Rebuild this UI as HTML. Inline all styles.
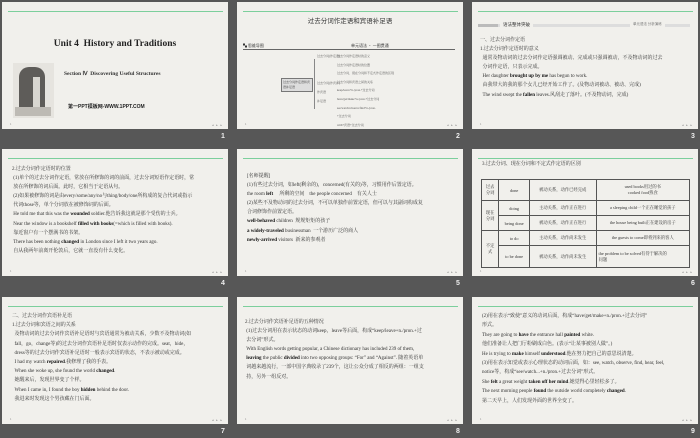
<!DOCTYPE html>
<html><head><meta charset="utf-8"><style>
*{margin:0;padding:0;box-sizing:border-box}
body{width:700px;height:438px;background:#575757;position:relative;overflow:hidden;font-family:"Liberation Serif","Noto Serif CJK SC","Noto Sans CJK SC",serif;color:#333}
.s{position:absolute;width:226px;height:127px;background:#f1f0ec;overflow:hidden}
.s:before{content:"";position:absolute;left:6px;right:5px;top:9px;height:1px;background:#7ccf9c}
.n{position:absolute;font:bold 7px "Liberation Sans",sans-serif;color:#eee}
.pg{position:absolute;left:8px;bottom:3px;font-size:3px;color:#777}
.nav{position:absolute;right:5px;bottom:2px;font-size:3px;color:#888;letter-spacing:1px}
.t{position:absolute;font-size:5px;line-height:9.1px;white-space:nowrap;color:#333}
.t div{white-space:nowrap}
b{color:#111}
table{border-collapse:collapse;position:absolute;font-size:4.3px;color:#333}
td{border:0.8px solid #555;text-align:center;padding:0 2px}
</style></head><body>

<!-- slide 1 -->
<div class="s" style="left:2px;top:2px">
<div style="position:absolute;left:0;width:226px;top:37px;text-align:center;font:bold 9.5px 'Liberation Serif',serif;color:#222">Unit 4&nbsp; History and Traditions</div>
<div style="position:absolute;left:11px;top:61px;width:41px;height:55px;background:#e6e4df">
<div style="position:absolute;left:6px;top:4px;width:26px;height:44px;background:#5e5c59;border-radius:10px 10px 3px 3px"></div>
<div style="position:absolute;left:20px;top:14px;width:7px;height:30px;background:#d8d6d0"></div>
<div style="position:absolute;left:2px;top:44px;width:36px;height:9px;background:#bdbab4"></div>
</div>
<div style="position:absolute;left:62px;top:69px;font:bold 5.5px 'Liberation Serif',serif;color:#333">Section Ⅳ&nbsp; Discovering Useful Structures</div>
<div style="position:absolute;left:66px;top:101px;font:bold 5px 'Liberation Sans','Noto Sans CJK SC',sans-serif;color:#222">第一PPT模板网-WWW.1PPT.COM</div>
<div class="pg">1</div><div class="nav">◂ ▸ ▸</div>
</div>
<div class="n" style="left:221px;top:133px">1</div>

<!-- slide 2 -->
<div class="s" style="left:237px;top:2px">
<div style="position:absolute;left:0;width:226px;top:13px;text-align:center;font:6.5px 'Noto Sans CJK SC',sans-serif;color:#333">过去分词作定语和宾语补足语</div>
<div style="position:absolute;left:6px;top:41px;width:212px;border-bottom:0.6px solid #666;font:4px 'Noto Sans CJK SC',sans-serif;color:#333">▚ 思维导图<span style="position:absolute;left:108px;top:0">单元语法 · 一图贯通</span></div>
<div style="position:absolute;left:44px;top:76px;width:32px;height:14px;border:0.6px solid #777;background:#ddd;font-size:3px;line-height:5px;padding:1px">过去分词作定语和宾语补足语</div>
<div style="position:absolute;left:77px;top:57px;width:1px;height:50px;background:#888"></div>
<div class="t" style="left:80px;top:50px;font-size:3px;line-height:9px;color:#555"><div>过去分词(作定语)</div><div>&nbsp;</div><div>&nbsp;</div><div>过去分词(作宾补)</div><div>作宾语</div><div>补足语</div></div>
<div class="t" style="left:100px;top:50px;font-size:3px;line-height:8.6px;color:#555"><div>过去分词作定语时的意义</div><div>过去分词作定语时的位置</div><div>过去分词、现在分词和不定式作定语的区别</div><div>过去分词和宾语之间的关系</div><div>keep/leave+n./pron.+过去分词</div><div>have/get/make+n./pron.+过去分词</div><div>see/watch/observe/find+n./pron.</div><div>+过去分词</div><div>with+宾语+过去分词</div></div>
<div class="pg">1</div><div class="nav">◂ ▸ ▸</div>
</div>
<div class="n" style="left:456px;top:133px">2</div>

<!-- slide 3 -->
<div class="s" style="left:472px;top:2px">
<div style="position:absolute;left:6px;top:22px;width:212px;height:3px;background:#ddd"></div>
<div style="position:absolute;left:6px;top:22px;width:20px;height:3px;background:#bbb"></div>
<div style="position:absolute;left:28px;top:20px;padding:0 3px;background:#f1f0ec;font:4.5px 'Noto Sans CJK SC',sans-serif;color:#333">语法整体突破</div>
<div style="position:absolute;left:158px;top:20px;padding:0 3px;background:#f1f0ec;font:3.5px 'Noto Sans CJK SC',sans-serif;color:#777">单元语法 分析演练</div>
<div class="t" style="left:8px;top:34px"><div>一、过去分词作定语</div><div>1.过去分词作定语时的意义</div><div>&nbsp;&nbsp;通常及物动词的过去分词作定语强调被动、完成或只强调被动，不及物动词的过去</div><div>&nbsp;&nbsp;分词作定语，只表示完成。</div><div>&nbsp;&nbsp;Her daughter <b>brought up by me</b> has begun to work.</div><div>&nbsp;&nbsp;由我带大的我的那个女儿已经开始工作了。(及物动词被动、被动、完成)</div><div>&nbsp;&nbsp;The wind swept the <b>fallen</b> leaves.风刮走了落叶。(不及物动词，完成)</div></div>
<div class="pg">1</div><div class="nav">◂ ▸ ▸</div>
</div>
<div class="n" style="left:691px;top:133px">3</div>

<!-- slide 4 -->
<div class="s" style="left:2px;top:149px">
<div class="t" style="left:10px;top:16px"><div>2.过去分词作定语时的位置</div><div>&nbsp;(1)单个的过去分词作定语，常放在所修饰的词的前面，过去分词短语作定语时，常</div><div>&nbsp;放在所修饰的词后面。此时，它相当于定语从句。</div><div>&nbsp;(2)如果被修饰的词是由every/some/any/no与thing/body/one所构成的复合代词或指示</div><div>&nbsp;代词those等，单个分词放在被修饰词的后面。</div><div>&nbsp;He told me that this was the <b>wounded</b> soldier.他告诉我这就是那个受伤的士兵。</div><div>&nbsp;Near the window is a bookshelf <b>filled with books</b>(=which is filled with books).</div><div>&nbsp;靠近窗户有一个摆满书的书架。</div><div>&nbsp;There has been nothing <b>changed</b> in London since I left it two years ago.</div><div>&nbsp;自从我两年前离开伦敦后，它就一直没有什么变化。</div></div>
<div class="pg">1</div><div class="nav">◂ ▸ ▸</div>
</div>
<div class="n" style="left:221px;top:280px">4</div>

<!-- slide 5 -->
<div class="s" style="left:237px;top:149px">
<div class="t" style="left:10px;top:23px"><div>[名师提醒]</div><div>(1)有些过去分词，如left(剩余的)，concerned(有关的)等，习惯用作后置定语。</div><div>the room <b>left</b>&nbsp;&nbsp;&nbsp;&nbsp;&nbsp;所剩的空间&nbsp;&nbsp;&nbsp;&nbsp;the people concerned&nbsp;&nbsp;&nbsp;&nbsp;有关人士</div><div>(2)某些不及物动词的过去分词，不可以单独作前置定语，但可以与其副词构成复</div><div>合词修饰作前置定语。</div><div><b>well-behaved</b> children&nbsp; 规规矩矩的孩子</div><div><b>a widely-traveled</b> businessman&nbsp; 一个游历广泛的商人</div><div><b>newly-arrived</b> visitors&nbsp; 新来的参观者</div></div>
<div class="pg">1</div><div class="nav">◂ ▸ ▸</div>
</div>
<div class="n" style="left:456px;top:280px">5</div>

<!-- slide 6 -->
<div class="s" style="left:472px;top:149px">
<div class="t" style="left:10px;top:11px"><div>3.过去分词、现在分词和不定式作定语的区别</div></div>
<table style="left:9px;top:30px;width:209px;height:89px">
<tr style="height:21px"><td>过去<br>分词</td><td>done</td><td>被动关系，动作已经完成</td><td>used books用过的书<br>cooked food熟食</td></tr>
<tr style="height:15px"><td rowspan="2">现在<br>分词</td><td>doing</td><td>主动关系，动作正在进行</td><td>a sleeping child一个正在睡觉的孩子</td></tr>
<tr style="height:15px"><td>being done</td><td>被动关系，动作正在进行</td><td>the house being built正在建设的房子</td></tr>
<tr style="height:15px"><td rowspan="2">不定<br>式</td><td>to do</td><td>主动关系，动作尚未发生</td><td>the guests to come即将到来的客人</td></tr>
<tr style="height:22px"><td>to be done</td><td>被动关系，动作尚未发生</td><td style="text-align:left">the problem to be solved有待于解决的<br>问题</td></tr>
</table>
<div class="pg">1</div><div class="nav">◂ ▸ ▸</div>
</div>
<div class="n" style="left:691px;top:280px">6</div>

<!-- slide 7 -->
<div class="s" style="left:2px;top:297px">
<div class="t" style="left:10px;top:15px;line-height:9.2px"><div>二、过去分词作宾语补足语</div><div>1.过去分词和宾语之间的关系</div><div>&nbsp;&nbsp;及物动词的过去分词作宾语补足语时与宾语通常为被动关系，少数不及物动词(如</div><div>&nbsp;&nbsp;fall，go，change等)的过去分词作宾语补足语时仅表示动作的完成。seat，hide，</div><div>&nbsp;&nbsp;dress等的过去分词作宾语补足语时一般表示宾语的状态，不表示被动或完成。</div><div>&nbsp;&nbsp;I had my watch <b>repaired</b>.我修理了我的手表。</div><div>&nbsp;&nbsp;When she woke up, she found the world <b>changed</b>.</div><div>&nbsp;&nbsp;她醒来后，发现世界变了个样。</div><div>&nbsp;&nbsp;When I came in, I found the boy <b>hidden</b> behind the door.</div><div>&nbsp;&nbsp;我进来时发现这个男孩藏在门后面。</div></div>
<div class="pg">1</div><div class="nav">◂ ▸ ▸</div>
</div>
<div class="n" style="left:221px;top:428px">7</div>

<!-- slide 8 -->
<div class="s" style="left:237px;top:297px">
<div class="t" style="left:8px;top:21px"><div>2.过去分词作宾语补足语的五种情况</div><div>&nbsp;(1)过去分词用在表示状态的动词keep，leave等后面，构成“keep/leave+n./pron.+过</div><div>&nbsp;去分词”形式。</div><div>&nbsp;With English words getting popular, a Chinese dictionary has included 239 of them,</div><div>&nbsp;<b>leaving</b> the public <b>divided</b> into two opposing groups: “For” and “Against”. 随着英语单</div><div>&nbsp;词越来越流行，一部中国字典收录了239个，这让公众分成了相反的两组：一组支</div><div>&nbsp;持，另外一组反对。</div></div>
<div class="pg">1</div><div class="nav">◂ ▸ ▸</div>
</div>
<div class="n" style="left:456px;top:428px">8</div>

<!-- slide 9 -->
<div class="s" style="left:472px;top:297px">
<div class="t" style="left:10px;top:15px;line-height:9.4px"><div>(2)用在表示“致使”意义的动词后面，构成“have/get/make+n./pron.+过去分词”</div><div>形式。</div><div>They are going to <b>have</b> the entrance hall <b>painted</b> white.</div><div>他们准备让人把门厅粉刷成白色。(表示“让某事被别人做”。)</div><div>He is trying to <b>make</b> himself <b>understood</b>.他在努力把自己的意思说清楚。</div><div>(3)用在表示知觉或表示心理状态的动词后面，如：see, watch, observe, find, hear, feel,</div><div>notice等，构成“see/watch...+n./pron.+过去分词”形式。</div><div>She <b>felt</b> a great weight <b>taken off her mind</b>.她觉得心里轻松多了。</div><div>The next morning people <b>found</b> the outside world completely <b>changed</b>.</div><div>第二天早上，人们发现外面的世界全变了。</div></div>
<div class="pg">1</div><div class="nav">◂ ▸ ▸</div>
</div>
<div class="n" style="left:691px;top:428px">9</div>

</body></html>
